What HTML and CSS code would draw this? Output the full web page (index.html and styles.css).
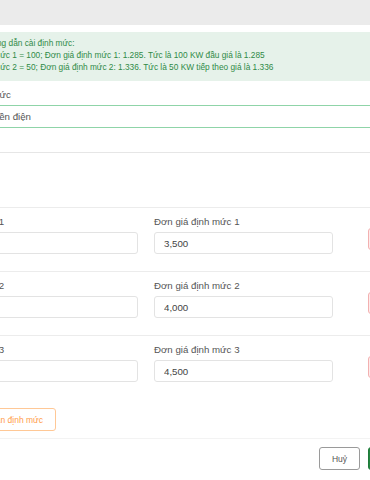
FILE: index.html
```html
<!DOCTYPE html>
<html lang="vi">
<head>
    <meta charset="UTF-8">
    <meta name="viewport" content="width=device-width, initial-scale=1.0">
    <title>Cài định mức</title>
    <link rel="stylesheet" href="styles.css">
</head>
<body>
    <div class="topbar"></div>

    <div class="modal">
        <div class="modal-body">
            <div class="alert">
                <div class="alert-title">Hướng dẫn cài định mức:</div>
                <div>Định mức 1 = 100; Đơn giá định mức 1: 1.285. Tức là 100 KW đầu giá là 1.285</div>
                <div>Định mức 2 = 50; Đơn giá định mức 2: 1.336. Tức là 50 KW tiếp theo giá là 1.336</div>
            </div>

            <div class="field">
                <label>Tên định mức</label>
                <input type="text" class="valid" value="Bảng tiền điện">
            </div>

            <div class="spacer"></div>

            <div class="tier">
                <div class="col">
                    <label>Định mức 1</label>
                    <input type="text" value="100">
                </div>
                <div class="col">
                    <label>Đơn giá định mức 1</label>
                    <input type="text" value="3,500">
                </div>
                <button class="btn-remove">Xoá</button>
            </div>
            <div class="tier">
                <div class="col">
                    <label>Định mức 2</label>
                    <input type="text" value="50">
                </div>
                <div class="col">
                    <label>Đơn giá định mức 2</label>
                    <input type="text" value="4,000">
                </div>
                <button class="btn-remove">Xoá</button>
            </div>
            <div class="tier">
                <div class="col">
                    <label>Định mức 3</label>
                    <input type="text" value="100">
                </div>
                <div class="col">
                    <label>Đơn giá định mức 3</label>
                    <input type="text" value="4,500">
                </div>
                <button class="btn-remove">Xoá</button>
            </div>

            <div class="add-row">
                <button class="btn-add">Thêm khoản định mức</button>
            </div>
        </div>

        <div class="modal-footer">
            <button class="btn-cancel">Huỷ</button>
            <button class="btn-save">Lưu</button>
        </div>
    </div>
</body>
</html>
```

FILE: styles.css
```css
body {
    margin: 0;
    font-family: "Liberation Sans", Arial, sans-serif;
    font-size: 9.7px;
    color: #555;
    background-color: #fff;
    overflow: hidden;
}
.topbar {
    height: 25px;
    background-color: #ebebeb;
}
.modal {
    margin-left: -56px;
    margin-top: 7px;
    width: 520px;
}
.modal-body {
    padding: 0 15px;
}
.alert {
    background-color: #e6f2ea;
    color: #2f8a47;
    font-size: 8.3px;
    padding: 5px 15px 8px 30px;
    line-height: 12px;
    margin: 0 -15px;
}
.alert-title {
    padding-left: 6px;
}
.field {
    margin-top: 8px;
}
.field label {
    display: block;
    line-height: 12px;
    margin: 0 0 4px -8px;
}
.field input {
    display: block;
    width: 100%;
    height: 23px;
    box-sizing: border-box;
    border: 1px solid #ddd;
    padding: 0 9px;
    font: inherit;
    color: #555;
}
.field input.valid {
    border-color: #8fd4a8;
}
.spacer {
    margin: 24px -15px 0;
    height: 54px;
    border-top: 1px solid #e6e6e6;
}
.tier {
    display: flex;
    align-items: flex-end;
    border-top: 1px solid #ececec;
    padding: 8px 0 17px;
    margin: 0 -15px;
    padding-left: 15px;
}
.tier:last-of-type {
    border-bottom: 1px solid #ececec;
}
.col {
    width: 179px;
    margin-right: 16px;
}
.col label {
    display: block;
    line-height: 12px;
    margin-bottom: 4px;
}
.col:first-child label {
    margin-left: -5px;
}
.col input {
    display: block;
    width: 100%;
    height: 22px;
    box-sizing: border-box;
    border: 1px solid #e3e3e3;
    border-radius: 3px;
    padding: 0 9px;
    font: inherit;
    color: #444;
}
.btn-remove {
    margin-left: 19px;
    height: 22px;
    margin-bottom: 4px;
    padding: 0 10px;
    border: 1px solid #f3b0b0;
    background-color: #fdeaea;
    color: #e05555;
    border-radius: 3px;
    font: inherit;
}
.add-row {
    padding: 9px 0 7px;
    margin-left: -14px;
}
.btn-add {
    height: 23px;
    padding: 0 12px;
    border: 1px solid #ffc896;
    border-radius: 3px;
    background-color: #fff;
    color: #ff9d4a;
    font: inherit;
    font-size: 8.5px;
}
.modal-footer {
    border-top: 1px solid #f3f3f3;
    padding: 8px 15px;
    display: flex;
    padding-left: 375px;
}
.btn-cancel {
    width: 41px;
    height: 23px;
    border: 1px solid #9a9a9a;
    border-radius: 3px;
    background-color: #fff;
    color: #555;
    font: inherit;
    font-size: 8.5px;
}
.btn-save {
    margin-left: 8px;
    height: 23px;
    padding: 0 12px;
    border: 1px solid #1f7a3a;
    border-radius: 3px;
    background-color: #23853f;
    color: #fff;
    font: inherit;
    font-size: 8.5px;
}
```
